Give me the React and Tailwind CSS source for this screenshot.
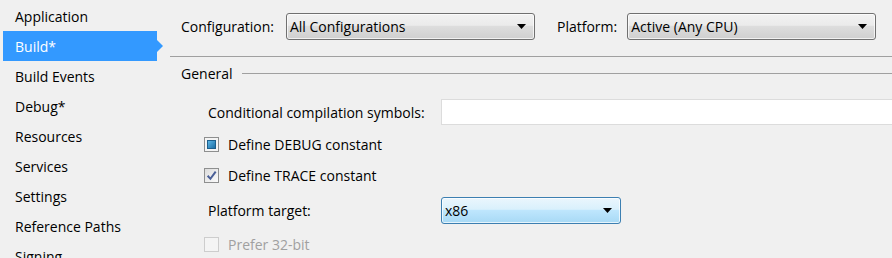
const navItems = ['Application', 'Build*', 'Build Events', 'Debug*', 'Resources', 'Services', 'Settings', 'Reference Paths', 'Signing']

function Caret() {
  return (
    <svg width="9" height="5" viewBox="0 0 9 5" className="shrink-0">
      <path d="M0 0h9L4.5 5z" fill="#000" />
    </svg>
  )
}

function Select({ value, w, active }) {
  const look = active
    ? 'border-[#3c7fb1] bg-[linear-gradient(#eaf6fd_0%,#d9f0fc_45%,#bee6fd_50%,#a7d9f5_100%)]'
    : 'border-[#707070] bg-[linear-gradient(#f2f2f2_0%,#ebebeb_45%,#dddddd_50%,#cfcfcf_100%)]'
  return (
    <div className={`flex items-center justify-between h-[27px] rounded-[3px] border pl-[3px] pr-[8px] shadow-[inset_0_0_0_1px_rgba(255,255,255,0.7)] ${look} ${w}`}>
      <span>{value}</span>
      <Caret />
    </div>
  )
}

function CheckBox({ state }) {
  if (state === 'mixed') {
    return (
      <div className="w-[15px] h-[15px] border border-[#8e8f8f] bg-[#f4f4f4] p-[2px]">
        <div className="w-full h-full border border-[#1d5f8c] bg-[linear-gradient(135deg,#5bb5e6,#1d6fa5)]" />
      </div>
    )
  }
  if (state === 'checked') {
    return (
      <div className="w-[15px] h-[15px] border border-[#8e8f8f] bg-[linear-gradient(135deg,#dcdcdc,#fbfbfb)] flex items-center justify-center">
        <svg width="11" height="11" viewBox="0 0 10 10">
          <path d="M1.5 5.2 L4 8 L8.8 1.5" fill="none" stroke="#4a5f97" strokeWidth="1.8" />
        </svg>
      </div>
    )
  }
  return <div className="w-[15px] h-[15px] border border-[#cdcdcd] bg-[#f4f4f4]" />
}

export default function App() {
  return (
    <div className="w-[892px] h-[258px] overflow-hidden bg-[#f0f0f0] text-[14px] text-[#000] font-['Segoe_UI','Open_Sans',sans-serif] flex">
      {/* Sidebar */}
      <div className="w-[170px] shrink-0 pt-px">
        {navItems.map(item => {
          const selected = item === 'Build*'
          return (
            <div key={item} className="h-[30px] flex items-center">
              {selected ? (
                <div className="flex items-center">
                  <div className="ml-[3px] w-[154px] h-[30px] bg-[#3399ff] text-white flex items-center pl-[12px]">{item}</div>
                  <div className="w-0 h-0 border-y-[6px] border-y-transparent border-l-[6px] border-l-[#3399ff]" />
                </div>
              ) : (
                <span className="pl-[15px]">{item}</span>
              )}
            </div>
          )
        })}
      </div>

      {/* Main */}
      <div className="flex-1 min-w-0">
        <div className="mt-[13px] pl-[11px] flex items-center h-[27px]">
          <span className="mr-[12px]">Configuration:</span>
          <Select value="All Configurations" w="w-[249px]" />
          <span className="ml-[22px] mr-[10px]">Platform:</span>
          <Select value="Active (Any CPU)" w="w-[249px]" />
        </div>
        <div className="mt-[16px] h-px bg-[#a0a0a0]" />

        <div className="mt-[7px] h-[18px] flex items-center pl-[11px]">
          <span>General</span>
          <div className="ml-[9px] flex-1 h-px bg-[#a0a0a0]" />
        </div>

        <div className="mt-[17px] h-[26px] flex items-center pl-[38px]">
          <span className="w-[233px] shrink-0">Conditional compilation symbols:</span>
          <div className="h-[26px] flex-1 bg-white border border-[#dcdcdc] border-r-0" />
        </div>

        <div className="mt-[9px] h-[20px] flex items-center pl-[34px] gap-[9px]">
          <CheckBox state="mixed" />
          <span>Define DEBUG constant</span>
        </div>

        <div className="mt-[11px] h-[20px] flex items-center pl-[34px] gap-[9px]">
          <CheckBox state="checked" />
          <span>Define TRACE constant</span>
        </div>

        <div className="mt-[12px] h-[27px] flex items-center pl-[38px]">
          <span className="w-[233px] shrink-0">Platform target:</span>
          <Select value="x86" w="w-[180px]" active />
        </div>

        <div className="mt-[10px] h-[20px] flex items-center pl-[34px] gap-[9px] text-[#a0a0a0]">
          <CheckBox state="off" />
          <span>Prefer 32-bit</span>
        </div>
      </div>
    </div>
  )
}
